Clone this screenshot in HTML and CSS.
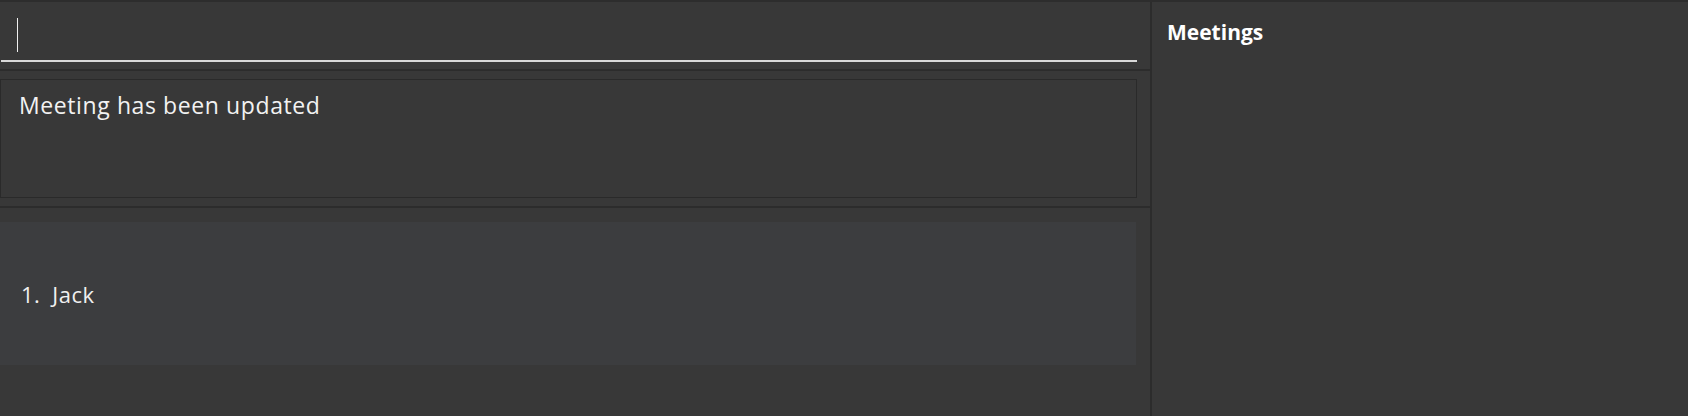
FILE: index.html
```html
<!DOCTYPE html>
<html>
<head>
<meta charset="utf-8">
<link rel="stylesheet" href="styles.css">
</head>
<body>
<div class="app">
  <div class="left">
    <div class="command">
      <div class="input"><span class="caret"></span></div>
    </div>
    <div class="hline"></div>
    <div class="result">
      <div class="result-box">Meeting has been updated</div>
    </div>
    <div class="hline"></div>
    <div class="list">
      <div class="cell"><span class="idx">1.</span><span class="name">Jack</span></div>
    </div>
  </div>
  <div class="vline"></div>
  <div class="right">
    <div class="title">Meetings</div>
  </div>
</div>
</body>
</html>
```
FILE: styles.css
```css
html, body {
  margin: 0;
  padding: 0;
  background: #383838;
  font-family: "Open Sans", "Noto Sans", sans-serif;
  color: #f0f0f0;
}
.app {
  display: flex;
  height: 414px;
  border-top: 2px solid #2d2d2d;
}
.left {
  width: 1150px;
  display: flex;
  flex-direction: column;
}
.command {
  height: 67px;
  padding: 0 13px 0 1px;
  box-sizing: border-box;
}
.input {
  height: 60px;
  border-bottom: 2px solid #d8d8d8;
  padding: 16px 0 0 16px;
  box-sizing: border-box;
}
.caret {
  display: block;
  width: 1px;
  height: 34px;
  background: #f0f0f0;
}
.hline {
  height: 2px;
  background: #2c2c2c;
}
.result {
  height: 135px;
  padding: 8px 13px 8px 0;
  box-sizing: border-box;
}
.result-box {
  height: 119px;
  border: 1px solid #2a2a2a;
  box-sizing: border-box;
  padding: 10px 0 0 18px;
  font-size: 23px;
  letter-spacing: 0.6px;
  line-height: 30px;
  color: #f2f2f2;
}
.list {
  flex: 1;
  padding: 14px 14px 0 0;
}
.cell {
  height: 143px;
  background: #3c3d3f;
  display: flex;
  align-items: center;
  padding-left: 21px;
  font-size: 22px;
  letter-spacing: 0.5px;
  color: #f0f0f0;
}
.idx {
  margin-right: 12px;
}
.vline {
  width: 2px;
  background: #2c2c2c;
}
.right {
  flex: 1;
  padding: 15px 0 0 15px;
}
.title {
  font-weight: 700;
  font-size: 21px;
  line-height: 30px;
  color: #ffffff;
}
```
